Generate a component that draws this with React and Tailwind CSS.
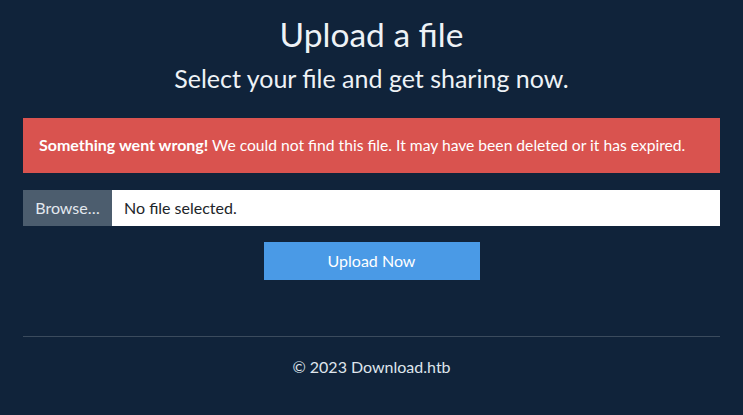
import React from 'react'

function App() {
    return (
        <div className="min-h-screen bg-[#10233a] text-[#eef2f6]" style={{fontFamily: 'Lato, "Open Sans", sans-serif'}}>
            <div className="mx-[23px] pt-[12px]">
                <h1 className="text-center text-[33.5px] leading-[44px] font-normal">Upload a file</h1>
                <p className="text-center text-[25px] leading-[32px] font-normal mt-[6px]">Select your file and get sharing now.</p>

                <div className="mt-[24px] bg-[#d9534f] px-[16px] h-[55px] flex items-center text-[15.65px] text-white">
                    <span><b className="text-[16px]">Something went wrong!</b> We could not find this file. It may have been deleted or it has expired.</span>
                </div>

                <div className="mt-[17px] flex h-[36px] text-[16px]">
                    <div className="w-[89px] bg-[#4c5d6e] flex items-center justify-center text-[#e3e8ee]">Browse…</div>
                    <div className="flex-1 bg-white flex items-center px-[12px] text-[#212529]">No file selected.</div>
                </div>

                <div className="flex justify-center mt-[16px]">
                    <button className="w-[216px] h-[38px] bg-[#4a9ae6] text-white text-[16px]">Upload Now</button>
                </div>

                <hr className="mt-[56px] border-t border-[#3b4b5d]" />
                <p className="text-center text-[16px] mt-[18px] text-[#dfe5ec]">© 2023 Download.htb</p>
            </div>
        </div>
    )
}

export default App
